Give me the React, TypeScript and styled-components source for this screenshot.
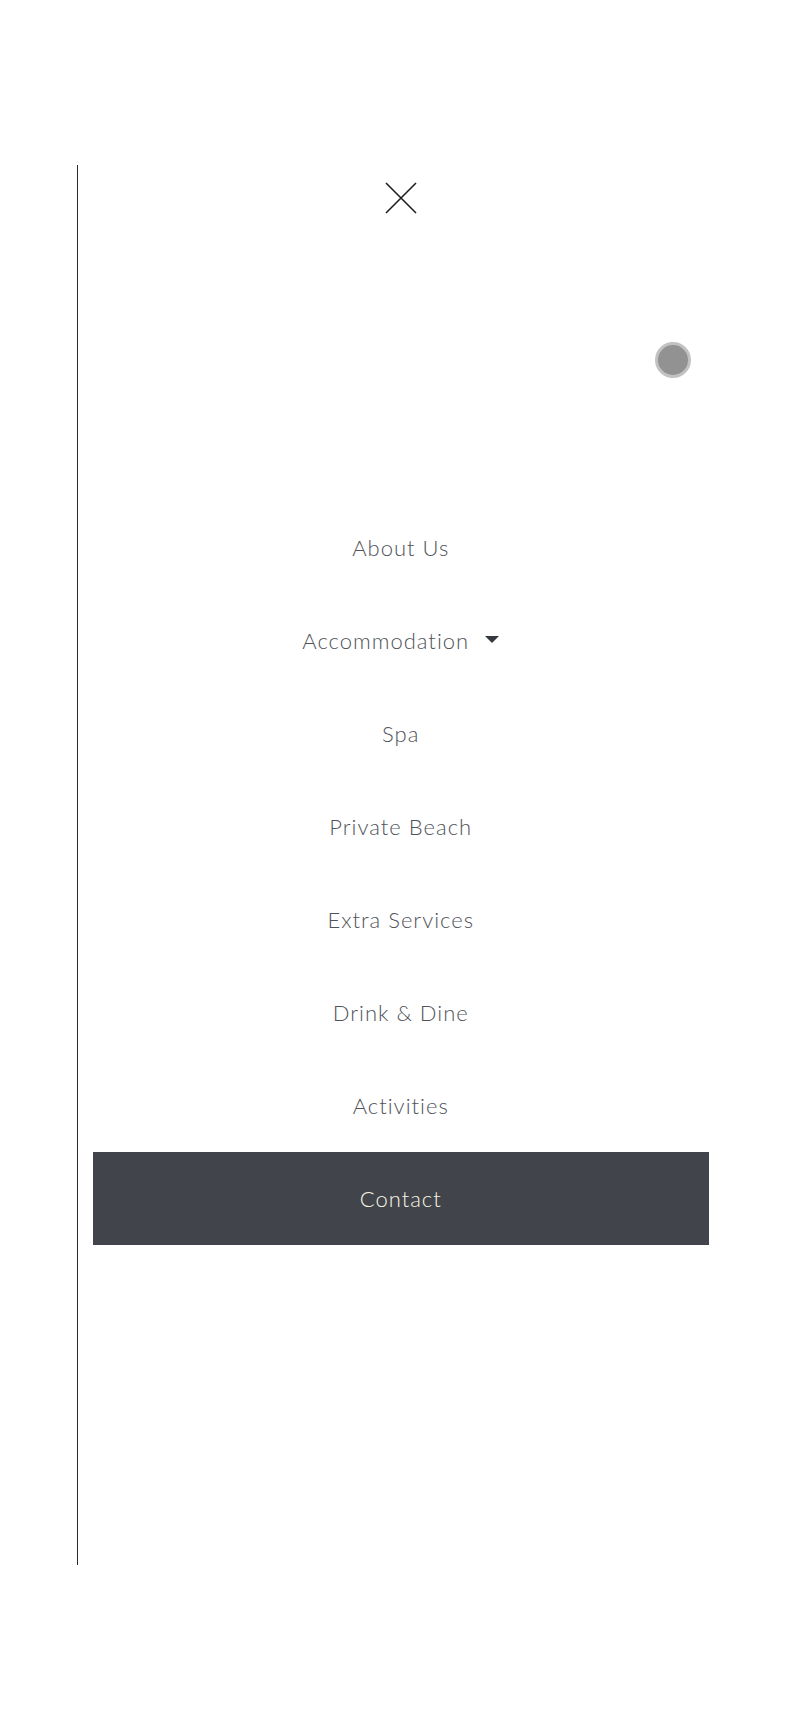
import React from 'react';
import styled, {createGlobalStyle} from 'styled-components';

const GlobalStyle = createGlobalStyle`
  html, body {
    margin: 0;
    padding: 0;
    background: #ffffff;
  }

  body {
    font-family: Lato, "Open Sans", "Liberation Sans", sans-serif;
  }
`;

const menuItems = [
  {label: 'About Us'},
  {label: 'Accommodation', dropdown: true},
  {label: 'Spa'},
  {label: 'Private Beach'},
  {label: 'Extra Services'},
  {label: 'Drink & Dine'},
  {label: 'Activities'},
  {label: 'Contact', active: true},
];

const CloseIcon = () => (
  <svg width="32" height="32" viewBox="0 0 32 32" aria-hidden="true">
    <path d="M1 1 L31 31 M31 1 L1 31" stroke="#1f1f1f" strokeWidth="1.6" fill="none" />
  </svg>
);

const Caret = () => (
  <svg width="14" height="7" viewBox="0 0 14 7" aria-hidden="true">
    <path d="M0 0 H14 L7 7 Z" fill="#35383d" />
  </svg>
);

export default function App() {
  return (
    <>
      <GlobalStyle />
      <Page>
        <Panel>
          <CloseRow>
            <CloseButton aria-label="Close menu">
              <CloseIcon />
            </CloseButton>
          </CloseRow>

          <ToggleRow>
            <Dot />
          </ToggleRow>

          <Menu>
            {menuItems.map((item) => (
              <MenuItem key={item.label} $active={item.active}>
                <span>{item.label}</span>
                {item.dropdown && (
                  <CaretWrap>
                    <Caret />
                  </CaretWrap>
                )}
              </MenuItem>
            ))}
          </Menu>
        </Panel>
      </Page>
    </>
  );
}

const Page = styled.div`
  padding: 165px 77px 166px 77px;
  min-height: 1731px;
  box-sizing: border-box;
`;

const Panel = styled.nav`
  border-left: 1.5px solid #2b2b2b;
  height: 1400px;
  box-sizing: border-box;
  padding: 17px 14px 0 14.5px;
  display: flex;
  flex-direction: column;
`;

const CloseRow = styled.div`
  display: flex;
  justify-content: center;
`;

const CloseButton = styled.button`
  border: 0;
  background: none;
  padding: 0;
  width: 32px;
  height: 32px;
  display: flex;
  cursor: pointer;
`;

const ToggleRow = styled.div`
  display: flex;
  justify-content: flex-end;
  padding: 128px 18px 0 0;
`;

const Dot = styled.span`
  width: 30px;
  height: 30px;
  border-radius: 50%;
  background: #929292;
  border: 3px solid #c2c2c2;
`;

const Menu = styled.ul`
  list-style: none;
  margin: 0;
  padding: 0;
  margin-top: 123px;
  display: flex;
  flex-direction: column;
`;

const MenuItem = styled.li<{$active?: boolean}>`
  height: 93px;
  display: flex;
  align-items: center;
  justify-content: center;
  font-size: 22px;
  font-weight: 300;
  letter-spacing: 1px;
  color: ${(p) => (p.$active ? '#f8f5e4' : '#505359')};
  background: ${(p) => (p.$active ? '#41454b' : 'transparent')};
`;

const CaretWrap = styled.span`
  display: flex;
  margin-left: 16px;
  margin-top: -2px;
`;
